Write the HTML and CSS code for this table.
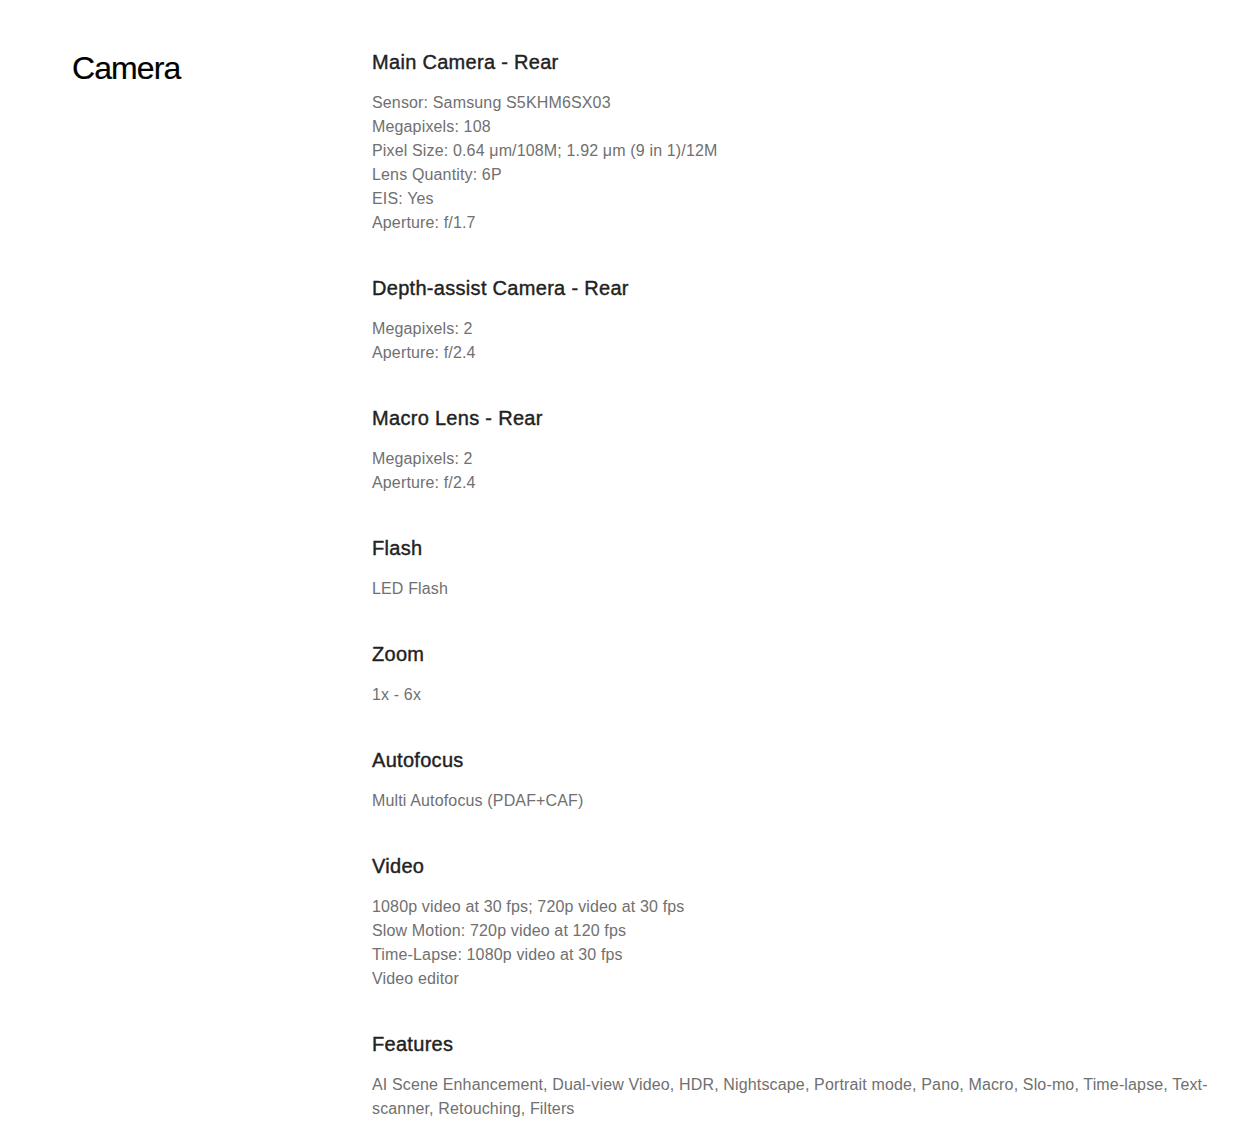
FILE: index.html
```html
<!DOCTYPE html>
<html lang="en">
<head>
    <meta charset="UTF-8">
    <meta name="viewport" content="width=device-width, initial-scale=1.0">
    <title>Camera Specs</title>
    <link rel="stylesheet" href="styles.css">
</head>
<body>
    <div class="spec-container">
        <h2 class="spec-title">Camera</h2>

        <div class="spec-list">
            <div class="spec-item">
                <h3>Main Camera - Rear</h3>
                <p>Sensor: Samsung S5KHM6SX03</p>
                <p>Megapixels: 108</p>
                <p>Pixel Size: 0.64 μm/108M; 1.92 μm (9 in 1)/12M</p>
                <p>Lens Quantity: 6P</p>
                <p>EIS: Yes</p>
                <p>Aperture: f/1.7</p>
            </div>

            <div class="spec-item">
                <h3>Depth-assist Camera - Rear</h3>
                <p>Megapixels: 2</p>
                <p>Aperture: f/2.4</p>
            </div>

            <div class="spec-item">
                <h3>Macro Lens - Rear</h3>
                <p>Megapixels: 2</p>
                <p>Aperture: f/2.4</p>
            </div>

            <div class="spec-item">
                <h3>Flash</h3>
                <p>LED Flash</p>
            </div>

            <div class="spec-item">
                <h3>Zoom</h3>
                <p>1x - 6x</p>
            </div>

            <div class="spec-item">
                <h3>Autofocus</h3>
                <p>Multi Autofocus (PDAF+CAF)</p>
            </div>

            <div class="spec-item">
                <h3>Video</h3>
                <p>1080p video at 30 fps; 720p video at 30 fps</p>
                <p>Slow Motion: 720p video at 120 fps</p>
                <p>Time-Lapse: 1080p video at 30 fps</p>
                <p>Video editor</p>
            </div>

            <div class="spec-item">
                <h3>Features</h3>
                <p>AI Scene Enhancement, Dual-view Video, HDR, Nightscape, Portrait mode, Pano, Macro, Slo-mo, Time-lapse, Text-scanner, Retouching, Filters</p>
            </div>
        </div>
    </div>
</body>
</html>
```

FILE: styles.css
```css
body {
    font-family: 'Liberation Sans', Arial, sans-serif;
    margin: 0;
    background: #fff;
}
.spec-container {
    display: grid;
    grid-template-columns: 300px 1fr;
    padding: 48px 30px 0 72px;
}
.spec-title {
    margin: 0;
    font-size: 32px;
    line-height: 40px;
    font-weight: normal;
    color: #000;
    letter-spacing: -0.9px;
    -webkit-text-stroke: 0.2px #000;
}
.spec-item {
    margin-bottom: 39px;
}
.spec-item h3 {
    margin: 0 0 15px;
    font-size: 20px;
    line-height: 28px;
    font-weight: normal;
    color: #222;
    letter-spacing: 0.3px;
    -webkit-text-stroke: 0.4px #222;
}
.spec-item p {
    margin: 0;
    font-size: 16px;
    line-height: 24px;
    color: #707070;
    letter-spacing: 0.15px;
}
```
